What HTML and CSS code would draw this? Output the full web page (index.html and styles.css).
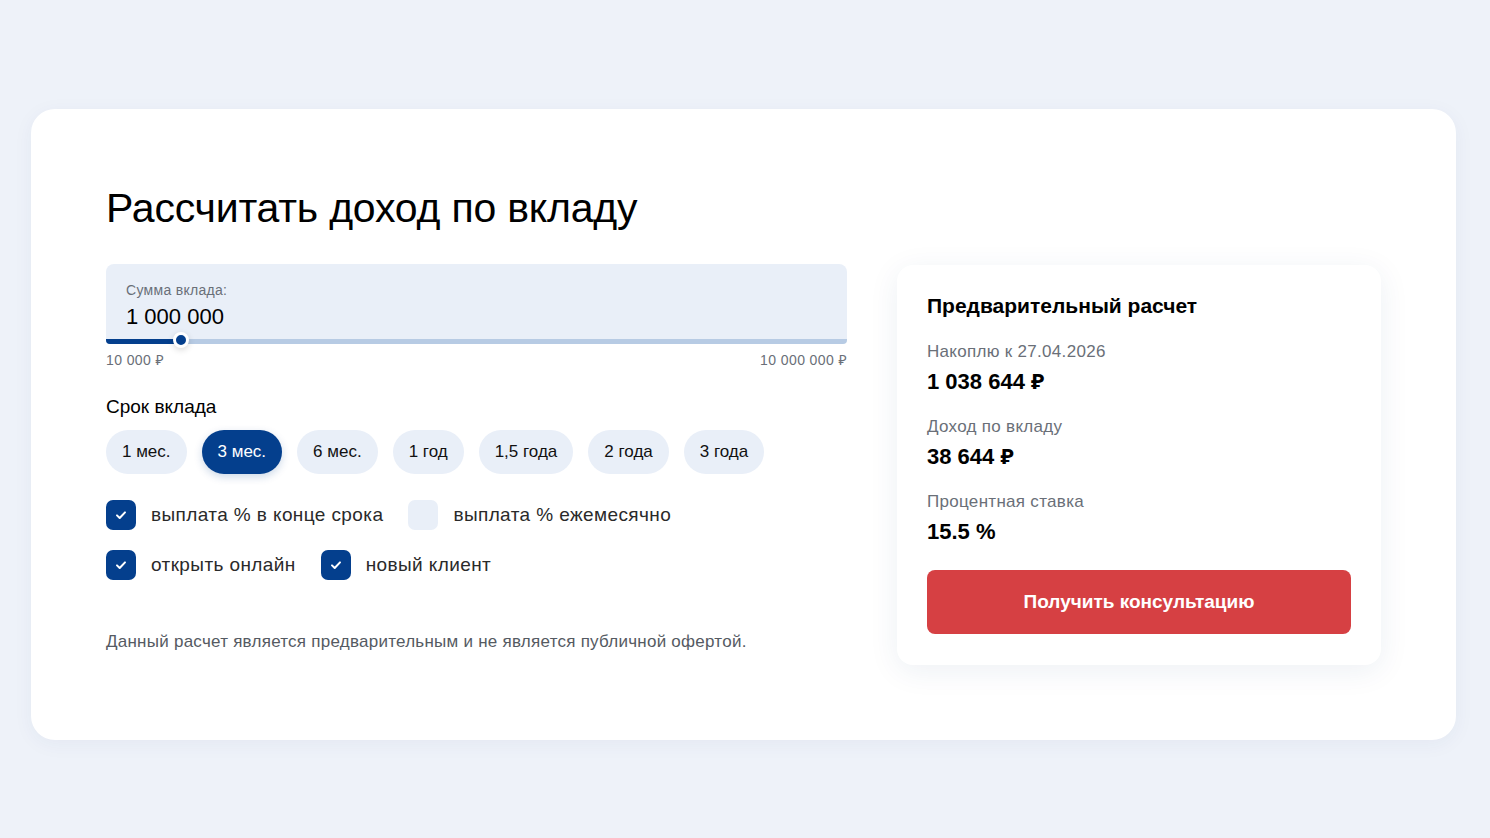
FILE: index.html
```html
<!DOCTYPE html>
<html lang="ru">

<head>
  <meta charset="UTF-8">
  <title>Рассчитать доход по вкладу</title>
  <link rel="stylesheet" href="styles.css">
</head>

<body>
  <div class="calc">
    <div class="calc-main">
      <h1 class="calc-title">Рассчитать доход по вкладу</h1>

      <div class="amount">
        <div class="amount-field">
          <div class="amount-label">Сумма вклада:</div>
          <div class="amount-value">1 000 000</div>
        </div>
        <div class="slider">
          <div class="slider-fill" style="width: 75px"></div>
          <div class="slider-thumb"></div>
        </div>
        <div class="slider-limits">
          <span>10 000 ₽</span>
          <span>10 000 000 ₽</span>
        </div>
      </div>

      <div class="term">
        <div class="term-title">Срок вклада</div>
        <div class="term-list">
          <button class="term-btn">1 мес.</button>
          <button class="term-btn active">3 мес.</button>
          <button class="term-btn">6 мес.</button>
          <button class="term-btn">1 год</button>
          <button class="term-btn">1,5 года</button>
          <button class="term-btn">2 года</button>
          <button class="term-btn">3 года</button>
        </div>
      </div>

      <div class="options">
        <div class="options-row">
          <label class="check">
            <span class="check-box checked">
              <svg width="16" height="16" viewBox="0 0 16 16"><path d="M4 8.4l2.7 2.6L12 5.4" fill="none" stroke="#fff" stroke-width="2" stroke-linecap="round" stroke-linejoin="round"/></svg>
            </span>
            выплата % в конце срока
          </label>
          <label class="check">
            <span class="check-box"></span>
            выплата % ежемесячно
          </label>
        </div>
        <div class="options-row">
          <label class="check">
            <span class="check-box checked">
              <svg width="16" height="16" viewBox="0 0 16 16"><path d="M4 8.4l2.7 2.6L12 5.4" fill="none" stroke="#fff" stroke-width="2" stroke-linecap="round" stroke-linejoin="round"/></svg>
            </span>
            открыть онлайн
          </label>
          <label class="check">
            <span class="check-box checked">
              <svg width="16" height="16" viewBox="0 0 16 16"><path d="M4 8.4l2.7 2.6L12 5.4" fill="none" stroke="#fff" stroke-width="2" stroke-linecap="round" stroke-linejoin="round"/></svg>
            </span>
            новый клиент
          </label>
        </div>
      </div>

      <p class="disclaimer">Данный расчет является предварительным и не является публичной офертой.</p>
    </div>

    <div class="result">
      <div class="result-title">Предварительный расчет</div>
      <div class="result-item">
        <div class="result-label">Накоплю к 27.04.2026</div>
        <div class="result-value">1 038 644 ₽</div>
      </div>
      <div class="result-item">
        <div class="result-label">Доход по вкладу</div>
        <div class="result-value">38 644 ₽</div>
      </div>
      <div class="result-item">
        <div class="result-label">Процентная ставка</div>
        <div class="result-value">15.5 %</div>
      </div>
      <button class="consult-btn">Получить консультацию</button>
    </div>
  </div>
</body>

</html>
```

FILE: styles.css
```css
* {
  margin: 0;
  padding: 0;
  box-sizing: border-box;
}

body {
  font-family: "Liberation Sans", Arial, "Noto Sans", sans-serif;
  background: #eef2f9;
  color: #000;
  padding: 109px 34px 0 31px;
  height: 100vh;
  overflow: hidden;
}

/* основная карточка */
.calc {
  background: #fff;
  border-radius: 24px;
  height: 631px;
  padding: 75px 75px 0 75px;
  display: flex;
  gap: 50px;
  box-shadow: 0 4px 20px rgba(30, 60, 120, 0.05);
}

.calc-main {
  width: 741px;
  flex-shrink: 0;
}

.calc-title {
  font-weight: 400;
  font-size: 41px;
  line-height: 48px;
  letter-spacing: -0.2px;
  margin-bottom: 32px;
}

/* сумма */
.amount-field {
  background: #e9eff8;
  border-radius: 8px 8px 0 0;
  height: 75px;
  padding: 17px 20px 0;
}

.amount-label {
  font-size: 14px;
  color: #6a6f78;
  line-height: 18px;
  letter-spacing: 0.3px;
}

.amount-value {
  font-size: 22px;
  line-height: 28px;
  margin-top: 4px;
}

.slider {
  position: relative;
  height: 5px;
  background: #b7cbe4;
  border-radius: 0 0 4px 4px;
}

.slider-fill {
  height: 5px;
  background: #043f8d;
  border-radius: 0 0 0 4px;
}

.slider-thumb {
  position: absolute;
  left: 67px;
  top: -7px;
  width: 16px;
  height: 16px;
  border-radius: 50%;
  background: #043f8d;
  border: 3px solid #fff;
  box-shadow: 0 2px 6px rgba(0, 0, 0, 0.15);
}

.slider-limits {
  display: flex;
  justify-content: space-between;
  font-size: 14px;
  color: #6a6f78;
  margin-top: 7px;
  line-height: 18px;
  letter-spacing: 0.4px;
}

/* срок */
.term {
  margin-top: 26px;
}

.term-title {
  font-size: 19px;
  line-height: 24px;
  margin-bottom: 11px;
}

.term-list {
  display: flex;
  gap: 15px;
}

.term-btn {
  font-family: inherit;
  height: 44px;
  padding: 0 16px;
  border: none;
  border-radius: 22px;
  background: #e9eff8;
  color: #111;
  font-size: 17px;
  cursor: pointer;
}

.term-btn.active {
  background: #043f8d;
  color: #fff;
  box-shadow: 0 3px 8px rgba(4, 63, 141, 0.2);
}

/* опции */
.options {
  margin-top: 26px;
  display: flex;
  flex-direction: column;
  gap: 20px;
}

.options-row {
  display: flex;
  gap: 25px;
}

.check {
  display: flex;
  align-items: center;
  gap: 15px;
  font-size: 19px;
  letter-spacing: 0.4px;
  color: #2a2a2a;
  cursor: pointer;
}

.check-box {
  width: 30px;
  height: 30px;
  border-radius: 7px;
  background: #e9eff8;
  display: flex;
  align-items: center;
  justify-content: center;
}

.check-box.checked {
  background: #043f8d;
}

.disclaimer {
  margin-top: 52px;
  font-size: 17px;
  letter-spacing: 0.25px;
  color: #555a62;
  line-height: 20px;
}

/* предварительный расчет */
.result {
  width: 484px;
  height: 400px;
  margin-top: 81px;
  background: #fff;
  border-radius: 16px;
  padding: 27px 30px 30px;
  box-shadow: 0 6px 30px rgba(30, 60, 120, 0.08);
}

.result-title {
  font-size: 21px;
  font-weight: 700;
  line-height: 28px;
  margin-bottom: 22px;
}

.result-item {
  margin-bottom: 21px;
}

.result-label {
  font-size: 17px;
  letter-spacing: 0.3px;
  color: #6a6f78;
  line-height: 20px;
}

.result-value {
  font-size: 22px;
  font-weight: 700;
  line-height: 28px;
  margin-top: 6px;
}

.consult-btn {
  margin-top: 3px;
  width: 100%;
  height: 64px;
  border: none;
  border-radius: 8px;
  background: #d64043;
  color: #fff;
  font-family: inherit;
  font-size: 19px;
  font-weight: 700;
  cursor: pointer;
}
```
